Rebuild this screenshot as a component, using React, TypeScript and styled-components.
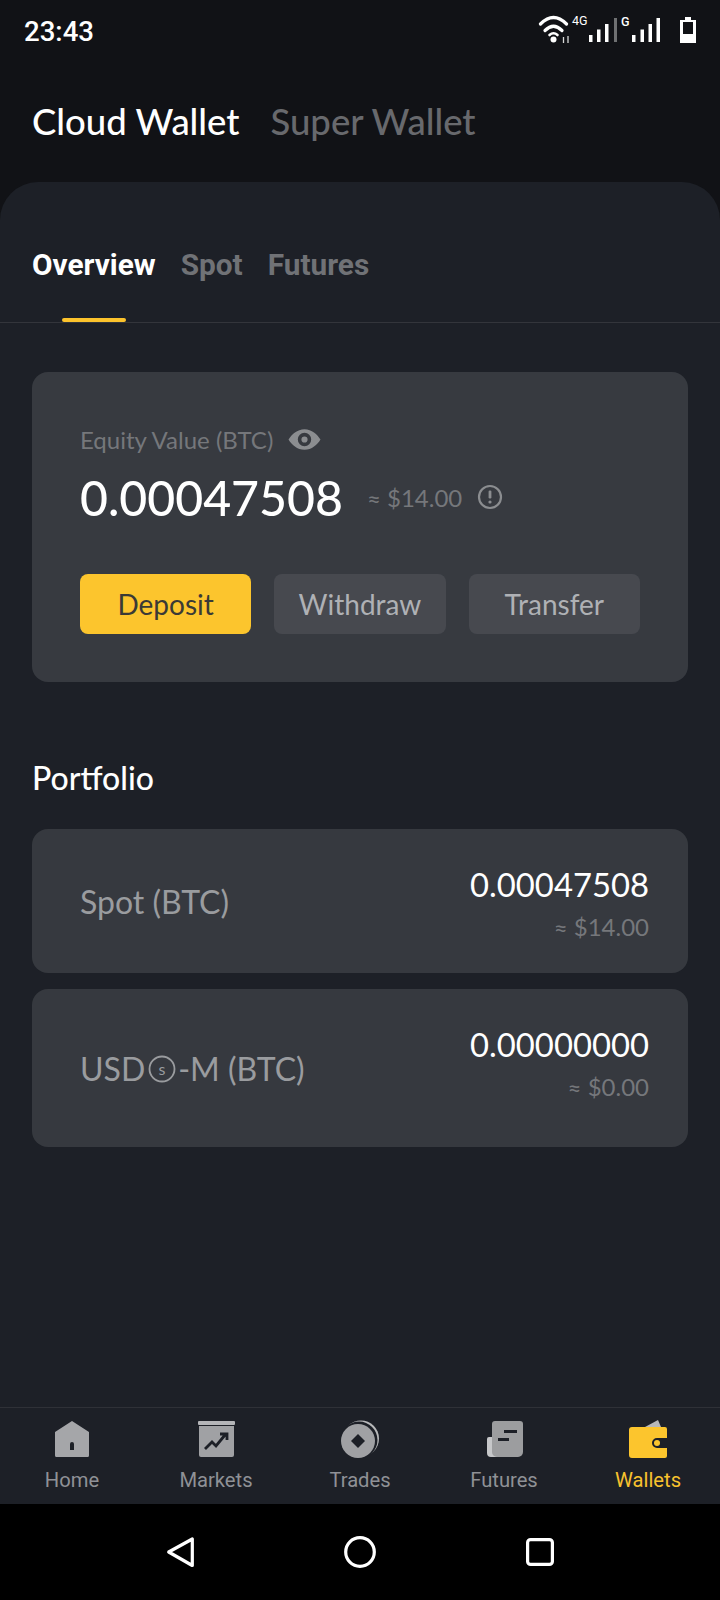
import React from "react";
import styled, { createGlobalStyle } from "styled-components";

const Global = createGlobalStyle`
  html, body { margin: 0; padding: 0; background: #000; }
  * { box-sizing: border-box; }
`;

const Screen = styled.div`
  width: 720px;
  height: 1600px;
  display: flex;
  flex-direction: column;
  background: #111216;
  font-family: "Lato", "Liberation Sans", sans-serif;
  overflow: hidden;
`;

const StatusBar = styled.div`
  height: 62px;
  flex: none;
  display: flex;
  align-items: center;
  justify-content: space-between;
  padding: 0 20px 0 24px;
`;

const Clock = styled.span`
  font-family: "Roboto", sans-serif;
  font-weight: 500;
  font-size: 27.6px;
  color: #fff;
`;

const StatusIcons = styled.svg`
  display: block;
  width: 165px;
  height: 40px;
`;

const WalletHeader = styled.div`
  height: 120px;
  flex: none;
  display: flex;
  align-items: center;
  gap: 31px;
  padding: 0 32px 2px;
`;

const WalletTitle = styled.span<{ $active?: boolean }>`
  font-size: 36.5px;
  font-weight: 500;
  color: ${(p) => (p.$active ? "#ffffff" : "#68696d")};
`;

const Sheet = styled.div`
  flex: 1;
  min-height: 0;
  display: flex;
  flex-direction: column;
  background: #1d2027;
  border-radius: 38px 38px 0 0;
`;

const TabBar = styled.div`
  height: 141px;
  flex: none;
  display: flex;
  gap: 25px;
  padding: 0 32px;
  border-bottom: 1px solid #33353b;
`;

const Tab = styled.div<{ $active?: boolean }>`
  position: relative;
  height: 100%;
  display: flex;
  align-items: center;
  padding-top: 24px;
  font-family: "Roboto", sans-serif;
  font-weight: 700;
  font-size: 29.8px;
  color: ${(p) => (p.$active ? "#ffffff" : "#707276")};
  ${(p) =>
    p.$active &&
    `&::after {
      content: "";
      position: absolute;
      left: 30px;
      right: 30px;
      bottom: 0;
      height: 4px;
      border-radius: 2px;
      background: #fcc32c;
    }`}
`;

const Content = styled.div`
  flex: 1;
  min-height: 0;
  display: flex;
  flex-direction: column;
  padding: 49px 32px 0;
`;

const EquityCard = styled.div`
  height: 310px;
  flex: none;
  padding: 51px 48px 0;
  border-radius: 16px;
  background: #373a40;
`;

const EquityLabelRow = styled.div`
  display: flex;
  align-items: center;
  gap: 15px;
  height: 32px;
  font-size: 24px;
  color: #75777b;
`;

const EquityValueRow = styled.div`
  display: flex;
  align-items: center;
  height: 62px;
  margin-top: 11px;
`;

const EquityValue = styled.span`
  font-size: 48.2px;
  font-weight: 500;
  color: #fff;
  margin-right: 24px;
`;

const EquityApprox = styled.span`
  font-size: 24px;
  color: #75777b;
  margin-right: 15px;
`;

const Actions = styled.div`
  display: grid;
  grid-template-columns: repeat(3, 1fr);
  column-gap: 23px;
  margin-top: 46px;
`;

const ActionButton = styled.div<{ $primary?: boolean }>`
  height: 60px;
  display: flex;
  align-items: center;
  justify-content: center;
  border-radius: 8px;
  font-size: 28px;
  background: ${(p) => (p.$primary ? "#fcc52d" : "#47494f")};
  color: ${(p) => (p.$primary ? "#3a3a36" : "#afb1b5")};
`;

const SectionTitle = styled.div`
  margin-top: 75px;
  height: 40px;
  display: flex;
  align-items: center;
  font-size: 32px;
  font-weight: 500;
  color: #fff;
`;

const PortfolioList = styled.div`
  display: flex;
  flex-direction: column;
  gap: 16px;
  margin-top: 32px;
`;

const PortfolioCard = styled.div<{ $h: number }>`
  height: ${(p) => p.$h}px;
  display: flex;
  align-items: center;
  justify-content: space-between;
  padding: 0 39px 0 48px;
  border-radius: 16px;
  background: #36393f;
`;

const PortfolioName = styled.span`
  display: inline-flex;
  align-items: center;
  font-size: 32px;
  color: #9a9c9f;
`;

const CoinMark = styled.svg`
  display: block;
  width: 28px;
  height: 28px;
  margin: 2px 2px 0 3px;
`;

const PortfolioValues = styled.div`
  align-self: flex-start;
  padding-top: 37px;
  display: flex;
  flex-direction: column;
  align-items: flex-end;
  gap: 8px;
`;

const PortfolioValue = styled.span`
  font-size: 32.8px;
  color: #fff;
  line-height: 38px;
`;

const PortfolioApprox = styled.span`
  font-size: 24px;
  color: #75777b;
  line-height: 30px;
`;

const BottomNav = styled.div`
  height: 97px;
  flex: none;
  display: grid;
  grid-template-columns: repeat(5, 1fr);
  background: #1d2027;
  border-top: 1px solid #2f3137;
`;

const NavItem = styled.div<{ $active?: boolean }>`
  display: flex;
  flex-direction: column;
  align-items: center;
  padding-top: 11px;
  gap: 8px;
  font-family: "Roboto", sans-serif;
  font-size: 20.2px;
  line-height: 26px;
  color: ${(p) => (p.$active ? "#f8c22e" : "#8f9196")};
`;

const NavIcon = styled.svg`
  display: block;
  width: 40px;
  height: 40px;
`;

const SystemBar = styled.div`
  height: 96px;
  flex: none;
  background: #000;
  display: flex;
  align-items: center;
  justify-content: center;
  gap: 144px;
`;

const SystemIcon = styled.svg`
  display: block;
  width: 36px;
  height: 36px;
  fill: none;
  stroke: #fff;
  stroke-width: 3.2;
  stroke-linejoin: round;
`;

const Bars = ({ xs, tall }: { xs: number[]; tall?: boolean }) => (
  <g fill="#fff">
    <rect x={xs[0]} y="35" width="3.5" height="7" />
    <rect x={xs[1]} y="29.500" width="3.5" height="12.500" />
    <rect x={xs[2]} y="24" width="3.5" height="18" />
    {tall && <rect x={xs[3]} y="18" width="3.5" height="24" />}
  </g>
);

const Eye = () => (
  <svg width="33" height="25" viewBox="0 0 32 24" style={{ display: "block" }}>
    <path
      fillRule="evenodd"
      d="M16 2c7 0 12.500 5 15.500 10-3 5-8.500 10-15.500 10S3.500 17 .5 12C3.500 7 9 2 16 2Zm0 3.500a6.500 6.500 0 1 0 0 13 6.500 6.500 0 0 0 0-13Zm0 3.500a3 3 0 1 1 0 6 3 3 0 0 1 0-6Z"
      fill="#8b8d90"
    />
  </svg>
);

const Info = () => (
  <svg width="26" height="26" viewBox="0 0 26 26" style={{ display: "block" }}>
    <circle cx="13" cy="13" r="11" fill="none" stroke="#8b8d90" strokeWidth="2.200" />
    <rect x="11.600" y="6.500" width="2.800" height="8" rx="1.200" fill="#8b8d90" />
    <circle cx="13" cy="18" r="1.600" fill="#8b8d90" />
  </svg>
);

export default function App() {
  return (
    <Screen>
      <Global />
      <StatusBar>
        <Clock>23:43</Clock>
        <StatusIcons viewBox="535 11 165 40">
          <g fill="none" stroke="#fff" strokeLinecap="round">
            <path d="M540.500 24 Q553.500 11 566.500 24" strokeWidth="3.200" />
            <path d="M545 30.500 Q553.500 22 562 30.500" strokeWidth="3.200" />
            <path d="M549.500 35 Q553.500 31.500 557.500 35" strokeWidth="2.600" />
          </g>
          <circle cx="553.500" cy="39.500" r="3" fill="#fff" />
          <path d="M563.500 37v6M568 36v7" stroke="#d8d8d8" strokeWidth="1.300" />
          <text x="572" y="25" fill="#fff" fontFamily="Roboto" fontSize="12.500" fontWeight="400">
            4G
          </text>
          <Bars xs={[589, 597, 605]} />
          <rect x="614" y="18" width="3" height="24" fill="#6f7072" />
          <text x="621" y="25.500" fill="#fff" fontFamily="Roboto" fontSize="12.500" fontWeight="500">
            G
          </text>
          <Bars xs={[632, 640.5, 648.5, 656.5]} tall />
          <path d="M685 17h6v3h5v23h-16V20h5Z" fill="#fff" />
          <rect x="683" y="22" width="10" height="12" fill="#111216" />
        </StatusIcons>
      </StatusBar>

      <WalletHeader>
        <WalletTitle $active>Cloud Wallet</WalletTitle>
        <WalletTitle>Super Wallet</WalletTitle>
      </WalletHeader>

      <Sheet>
        <TabBar>
          <Tab $active>Overview</Tab>
          <Tab>Spot</Tab>
          <Tab>Futures</Tab>
        </TabBar>
        <Content>
          <EquityCard>
            <EquityLabelRow>
              Equity Value (BTC)
              <Eye />
            </EquityLabelRow>
            <EquityValueRow>
              <EquityValue>0.00047508</EquityValue>
              <EquityApprox>≈ $14.00</EquityApprox>
              <Info />
            </EquityValueRow>
            <Actions>
              <ActionButton $primary>Deposit</ActionButton>
              <ActionButton>Withdraw</ActionButton>
              <ActionButton>Transfer</ActionButton>
            </Actions>
          </EquityCard>

          <SectionTitle>Portfolio</SectionTitle>
          <PortfolioList>
            <PortfolioCard $h={144}>
              <PortfolioName>Spot (BTC)</PortfolioName>
              <PortfolioValues>
                <PortfolioValue>0.00047508</PortfolioValue>
                <PortfolioApprox>≈ $14.00</PortfolioApprox>
              </PortfolioValues>
            </PortfolioCard>
            <PortfolioCard $h={158}>
              <PortfolioName>
                USD
                <CoinMark viewBox="0 0 28 28">
                  <circle cx="14" cy="14" r="12.500" fill="none" stroke="#9a9c9f" strokeWidth="1.800" />
                  <text x="14" y="19.500" textAnchor="middle" fill="#9a9c9f" fontFamily="Lato" fontSize="16">
                    s
                  </text>
                </CoinMark>
                -M (BTC)
              </PortfolioName>
              <PortfolioValues>
                <PortfolioValue>0.00000000</PortfolioValue>
                <PortfolioApprox>≈ $0.00</PortfolioApprox>
              </PortfolioValues>
            </PortfolioCard>
          </PortfolioList>
        </Content>
        <BottomNav>
          <NavItem>
            <NavIcon viewBox="0 0 40 40">
              <path
                fillRule="evenodd"
                d="M20 2 37 13v23.500a1.500 1.500 0 0 1-1.500 1.500h-31A1.500 1.500 0 0 1 3 36.500V13L20 2Zm-2 23v6h4v-6a2 2 0 0 0-4 0Z"
                fill="#a5a6a9"
              />
            </NavIcon>
            Home
          </NavItem>
          <NavItem>
            <NavIcon viewBox="0 0 40 40">
              <rect x="2" y="2" width="37" height="4" rx="1" fill="#b4b5b8" />
              <path d="M3 7h35v29a2 2 0 0 1-2 2H5a2 2 0 0 1-2-2V7Z" fill="#a0a1a4" />
              <path d="M9 30l7-7 4 4 9-11M24 15h7v6" fill="none" stroke="#1d2027" strokeWidth="2.800" />
            </NavIcon>
            Markets
          </NavItem>
          <NavItem>
            <NavIcon viewBox="0 0 40 40">
              <circle cx="21" cy="19.500" r="18" fill="#b8b9bb" />
              <circle cx="19" cy="21" r="18.500" fill="#1d2027" />
              <circle cx="18" cy="22" r="17" fill="#a0a1a4" />
              <path d="M18 15l7 7-7 7-7-7Z" fill="#1d2027" />
            </NavIcon>
            Trades
          </NavItem>
          <NavItem>
            <NavIcon viewBox="0 0 40 40">
              <path d="M11 2h25a3 3 0 0 1 3 3v28a5 5 0 0 1-5 5H10a4 4 0 0 1-2-1V5a3 3 0 0 1 3-3Z" fill="#9c9d9f" />
              <path d="M8 18H5a2 2 0 0 0-2 2v14a4 4 0 0 0 4 4h6a5 5 0 0 1-5-5Z" fill="#c6c7c9" />
              <path d="M20 11h13v3H20ZM14 19h11v3H14Z" fill="#1d2027" />
            </NavIcon>
            Futures
          </NavItem>
          <NavItem $active>
            <NavIcon viewBox="0 0 40 40">
              <path d="M17 8 30 1l3 7Z" fill="#b8b9bb" />
              <path
                d="M4 8h33a2 2 0 0 1 2 2v9H29a5 5 0 0 0 0 10h10v8a2 2 0 0 1-2 2H4a3 3 0 0 1-3-3V11a3 3 0 0 1 3-3Z"
                fill="#fcc52d"
              />
              <circle cx="29" cy="24" r="3" fill="#fcc52d" />
            </NavIcon>
            Wallets
          </NavItem>
        </BottomNav>
      </Sheet>

      <SystemBar>
        <SystemIcon viewBox="0 0 36 36">
          <path d="M30.300 5v26.500L6.700 18Z" />
        </SystemIcon>
        <SystemIcon viewBox="0 0 36 36">
          <circle cx="18" cy="18" r="14.300" />
        </SystemIcon>
        <SystemIcon viewBox="0 0 36 36">
          <rect x="5.600" y="5.600" width="24.800" height="24.800" rx="3" />
        </SystemIcon>
      </SystemBar>
    </Screen>
  );
}
